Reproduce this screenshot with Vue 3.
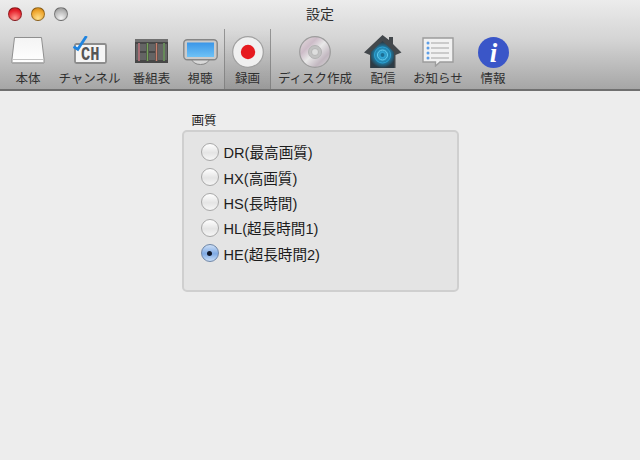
<template>
  <div class="window">
    <header class="toolbar">
      <div class="titlebar">
        <div class="lights">
          <span class="light red"></span>
          <span class="light amber"></span>
          <span class="light gray"></span>
        </div>
        <div class="title">設定</div>
      </div>
      <nav class="tools">
        <div class="tool t-body">
          <svg class="ic-body" width="34" height="27" viewBox="0 0 34 27">
            <defs>
              <linearGradient id="disk" x1="0" y1="0" x2="0" y2="1">
                <stop offset="0" stop-color="#f4f4f4" />
                <stop offset="1" stop-color="#ffffff" />
              </linearGradient>
            </defs>
            <path d="M3.500 .5 H30.500 L33 22 V26 H1 V22 Z" fill="url(#disk)" stroke="#8f8f8f" stroke-width="1" />
            <path d="M1 22.500 H33" stroke="#c4c4c4" stroke-width="1" />
            <path d="M1.500 25.500 H32.500" stroke="#b0b0b0" stroke-width="1" />
          </svg>
          <span>本体</span>
        </div>
        <div class="tool t-ch">
          <svg class="ic-ch" width="34" height="28" viewBox="0 0 34 28">
            <rect x="2" y="8" width="31" height="19" rx="1.500" fill="#f5f5f5" stroke="#8c8c8c" stroke-width="1.800" />
            <text x="8" y="24" class="ch" textLength="18.500" lengthAdjust="spacingAndGlyphs">CH</text>
            <path d="M.5 10.700 L4.800 13.300 L13.500 0" fill="none" stroke="#1f84e0" stroke-width="2.800" />
          </svg>
          <span>チャンネル</span>
        </div>
        <div class="tool t-guide">
          <svg class="ic-guide" width="33" height="24" viewBox="0 0 33 24">
            <rect width="33" height="24" fill="#474747" />
            <rect width="33" height="3" fill="#707070" />
            <g fill="#646464">
              <rect x="1" y="5" width="2" height="16" />
              <rect x="5" y="5" width="6" height="7" />
              <rect x="5" y="14" width="6" height="7" />
              <rect x="14" y="5" width="6" height="7" />
              <rect x="14" y="14" width="6" height="7" />
              <rect x="23" y="5" width="5" height="16" />
              <rect x="30" y="5" width="2" height="16" />
            </g>
            <path d="M4 4v18" stroke="#c77b84" stroke-width="1.500" />
            <path d="M12.500 4v18" stroke="#76a35a" stroke-width="1.500" />
            <path d="M21.500 4v18" stroke="#c8806c" stroke-width="1.500" />
            <path d="M29 4v18" stroke="#70a060" stroke-width="1.500" />
          </svg>
          <span>番組表</span>
        </div>
        <div class="tool t-watch">
          <svg class="ic-watch" width="35" height="26" viewBox="0 0 35 26">
            <defs>
              <linearGradient id="screen" x1="0" y1="0" x2="0" y2="1">
                <stop offset="0" stop-color="#3a96e8" />
                <stop offset="1" stop-color="#6ec2f6" />
              </linearGradient>
            </defs>
            <path d="M8 19 Q10 25.500 17.500 25.500 Q25 25.500 27 19" fill="#d8d8d8" stroke="#858585" stroke-width="1" />
            <rect x=".8" y=".8" width="33.400" height="20" rx="3.500" fill="#cbcbcb" stroke="#868686" stroke-width="1.400" />
            <rect x="4" y="3.500" width="27" height="14.500" fill="url(#screen)" />
          </svg>
          <span>視聴</span>
        </div>
        <div class="tool active">
          <svg class="ic-rec" width="32" height="32" viewBox="0 0 32 32">
            <circle cx="16" cy="16" r="15.300" fill="#f0f0f0" stroke="#a0a0a0" stroke-width="1.200" />
            <circle cx="16" cy="16" r="7.200" fill="#e61a1f" />
          </svg>
          <span>録画</span>
        </div>
        <div class="tool t-disc">
          <svg class="ic-disc" width="32" height="32" viewBox="0 0 32 32">
            <defs>
              <linearGradient id="cd" x1="0" y1="0" x2="1" y2="1">
                <stop offset="0" stop-color="#e6e0e0" />
                <stop offset=".3" stop-color="#cdbcc8" />
                <stop offset=".5" stop-color="#e8e8e8" />
                <stop offset=".75" stop-color="#c2b7c0" />
                <stop offset="1" stop-color="#d8d8d8" />
              </linearGradient>
            </defs>
            <circle cx="16" cy="16" r="15.300" fill="url(#cd)" stroke="#9c9c9c" stroke-width="1.200" />
            <circle cx="16" cy="16" r="6.500" fill="#c2c2c2" stroke="#b2b2b2" stroke-width="1" />
            <circle cx="16" cy="16" r="3.500" fill="#dedede" stroke="#aaa" stroke-width=".7" />
          </svg>
          <span>ディスク作成</span>
        </div>
        <div class="tool t-cast">
          <svg class="ic-cast" width="38" height="33" viewBox="0 0 38 33">
            <defs>
              <radialGradient id="glow" cx="18.500" cy="20" r="13" gradientUnits="userSpaceOnUse">
                <stop offset="0" stop-color="#3ab8ea" />
                <stop offset=".6" stop-color="#1f7ea8" />
                <stop offset="1" stop-color="#2c3b45" />
              </radialGradient>
            </defs>
            <path d="M18.500 0 L25 5 V2 H29 V9 L37.500 17.500 L31.500 20 V33 H6 V20 L0 17.500 Z" fill="#43484c" />
            <path d="M18.500 6 L30 17 V33 H7 V17 Z" fill="url(#glow)" />
            <circle cx="18.500" cy="20" r="8" fill="none" stroke="#2da3d4" stroke-width="1" />
            <circle cx="18.500" cy="20" r="5" fill="none" stroke="#64cdf0" stroke-width="1" />
            <circle cx="18.500" cy="20" r="2" fill="#1c6e94" />
          </svg>
          <span>配信</span>
        </div>
        <div class="tool t-news">
          <svg class="ic-news" width="32" height="30" viewBox="0 0 32 30">
            <path d="M1 1 H31 V25 H18 L13.500 29 V25 H1 Z" fill="#f1f1f1" stroke="#9c9c9c" stroke-width="1.400" />
            <g fill="#5d9ee6">
              <circle cx="6" cy="6" r="1.500" />
              <circle cx="6" cy="11" r="1.500" />
              <circle cx="6" cy="16" r="1.500" />
              <circle cx="6" cy="21" r="1.500" />
            </g>
            <g stroke="#c6c6c6" stroke-width="1.800">
              <path d="M9 6H27" />
              <path d="M9 11H27" />
              <path d="M9 16H27" />
              <path d="M9 21H27" />
            </g>
          </svg>
          <span>お知らせ</span>
        </div>
        <div class="tool t-info">
          <svg class="ic-info" width="31" height="31" viewBox="0 0 31 31">
            <circle cx="15.500" cy="15.500" r="15.500" fill="#3a56c8" />
            <text x="15.500" y="25" class="info">i</text>
          </svg>
          <span>情報</span>
        </div>
      </nav>
    </header>

    <main class="content">
      <section class="group">
        <div class="group-label">画質</div>
        <div class="group-box">
          <label v-for="opt in options" :key="opt" class="radio-row">
            <span class="radio" :class="{ on: opt === selected }"></span>
            <span>{{ opt }}</span>
          </label>
        </div>
      </section>
    </main>
  </div>
</template>

<script setup>
import { ref } from 'vue'

const options = ['DR(最高画質)', 'HX(高画質)', 'HS(長時間)', 'HL(超長時間1)', 'HE(超長時間2)']
const selected = ref('HE(超長時間2)')
</script>

<style>
html,
body {
  margin: 0;
  background: #ededed;
}
</style>

<style scoped>
.window {
  width: 640px;
  height: 460px;
  overflow: hidden;
  background: #ededed;
  font-family: "Liberation Sans", "Noto Sans CJK JP", sans-serif;
}

.toolbar {
  height: 89px;
  background: linear-gradient(#ececec 0%, #d4d4d4 45%, #a6a6a6 100%);
  border-bottom: 2px solid #707070;
}

.titlebar {
  height: 29px;
  box-sizing: border-box;
  padding-bottom: 3px;
  display: flex;
  align-items: center;
  justify-content: center;
  position: relative;
}

.lights {
  position: absolute;
  left: 8px;
  top: 7px;
  display: flex;
  gap: 9px;
}

.light {
  width: 14px;
  height: 14px;
  border-radius: 50%;
  box-sizing: border-box;
  border: 1px solid rgba(0, 0, 0, 0.35);
}

.red {
  background: radial-gradient(circle at 50% 85%, #ff9a90, #e6222c 65%, #b01018);
}

.amber {
  background: radial-gradient(circle at 50% 85%, #ffe08a, #eda32a 65%, #b87412);
}

.gray {
  background: radial-gradient(circle at 50% 85%, #f4f4f4, #b4b4b4 65%, #8c8c8c);
}

.title {
  font-size: 14px;
  color: #303030;
}

.tools {
  height: 60px;
  display: flex;
  align-items: stretch;
}

.tool {
  flex: none;
  display: flex;
  flex-direction: column;
  align-items: center;
  padding-bottom: 3px;
  box-sizing: border-box;
  font-size: 12.5px;
  line-height: 14px;
  color: #303030;
  white-space: nowrap;
}

.tool svg {
  display: block;
  flex: none;
}

.tool span {
  margin-top: auto;
}

.t-body { width: 56px; }
.t-ch { width: 67px; }
.t-guide { width: 57px; }
.t-watch { width: 40px; margin-right: 4px; }
.t-disc { width: 88px; }
.t-cast { width: 48px; }
.t-news { width: 62px; }
.t-info { width: 48px; }

.ic-body { margin-top: 8px; }
.ic-ch { margin-top: 7px; }
.ic-guide { margin-top: 10px; }
.ic-watch { margin-top: 10px; }
.ic-rec { margin-top: 7px; }
.ic-disc { margin-top: 7px; }
.ic-cast { margin-top: 6px; }
.ic-news { margin-top: 8px; }
.ic-info { margin-top: 8px; }

.tool.active {
  width: 47px;
  background: linear-gradient(rgba(120, 120, 120, 0), rgba(110, 110, 110, 0.22));
  border-left: 1px solid rgba(120, 120, 120, 0.7);
  border-right: 1px solid rgba(120, 120, 120, 0.7);
}

.ch {
  font-family: "Liberation Mono", monospace;
  font-size: 20px;
  font-weight: 700;
  fill: #555;
}

.info {
  font-family: "Liberation Serif", serif;
  font-style: italic;
  font-weight: 700;
  font-size: 27px;
  fill: #fff;
  text-anchor: middle;
}

.content {
  display: flex;
  justify-content: center;
  padding-top: 23px;
}

.group {
  width: 277px;
}

.group-label {
  font-size: 12.5px;
  line-height: 14px;
  color: #222;
  padding-left: 10px;
  margin-bottom: 2px;
}

.group-box {
  height: 162px;
  box-sizing: border-box;
  background: #e4e4e4;
  border: 2px solid #cfcfcf;
  border-radius: 5px;
  padding: 7px 17px;
  display: flex;
  flex-direction: column;
}

.radio-row {
  height: 25.4px;
  display: flex;
  align-items: center;
  gap: 5px;
  font-size: 14.6px;
  color: #1c1c1c;
  white-space: nowrap;
}

.radio {
  width: 18px;
  height: 18px;
  box-sizing: border-box;
  border-radius: 50%;
  border: 1px solid #a8a8a8;
  background: linear-gradient(#ffffff, #e4e4e4 55%, #f6f6f6);
  position: relative;
}

.radio.on {
  background: linear-gradient(#cddff6, #7faae4 55%, #c8def8);
  border-color: #6f87a8;
}

.radio.on::after {
  content: '';
  position: absolute;
  left: 5.5px;
  top: 5.5px;
  width: 5px;
  height: 5px;
  border-radius: 50%;
  background: #10182a;
}
</style>
